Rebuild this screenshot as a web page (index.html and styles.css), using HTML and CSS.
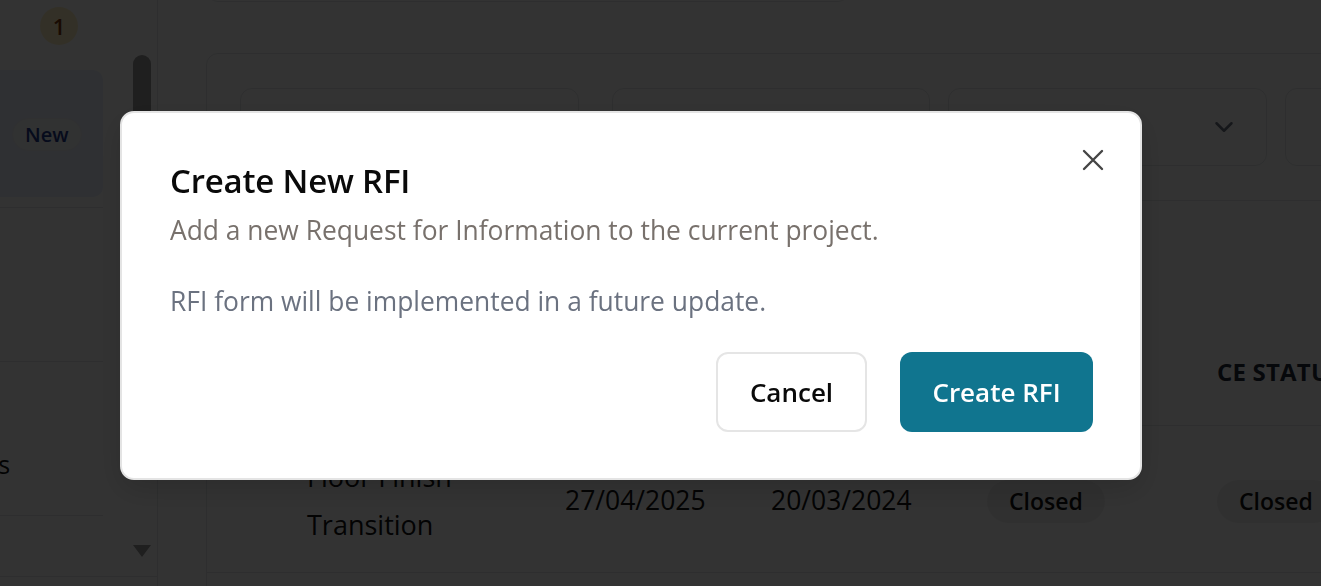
FILE: index.html
```html
<!DOCTYPE html>
<html lang="en">
<head>
<meta charset="utf-8">
<title>Create New RFI</title>
<link rel="stylesheet" href="styles.css">
</head>
<body>
<div class="app">
  <aside class="sidebar">
    <div class="side-scroll">
      <div class="side-list">
        <div class="side-top"><span class="count-badge">1</span></div>
        <div class="side-item side-item--active"><span class="new-pill">New</span></div>
        <div class="side-item side-item--plain"></div>
        <div class="side-item side-item--label"><span class="side-label">RFIs</span></div>
        <div class="side-item side-item--last"></div>
      </div>
      <div class="scroll-track">
        <div class="scroll-thumb"></div>
        <div class="scroll-arrow"></div>
      </div>
    </div>
    <div class="side-footer"></div>
  </aside>

  <main class="main">
    <div class="search-box"></div>
    <section class="card">
      <div class="filters">
        <div class="field field--search"></div>
        <div class="field field--date"></div>
        <div class="field field--select">
          <svg class="chevron" viewBox="0 0 24 24" width="24" height="24" aria-hidden="true"><path d="M6 9l6 6 6-6" fill="none" stroke="#6b7280" stroke-width="2" stroke-linecap="round" stroke-linejoin="round"/></svg>
        </div>
        <div class="field field--extra"></div>
      </div>
      <div class="table">
        <div class="toolbar"></div>
        <div class="row row--head">
          <div class="cell"></div>
          <div class="cell"></div>
          <div class="cell"></div>
          <div class="cell"></div>
          <div class="cell"></div>
          <div class="cell head-ce">CE STATUS</div>
        </div>
        <div class="row row--data">
          <div class="cell"></div>
          <div class="cell cell--name">Floor Finish<br>Transition</div>
          <div class="cell cell--date">27/04/2025</div>
          <div class="cell cell--date">20/03/2024</div>
          <div class="cell"><span class="status-pill">Closed</span></div>
          <div class="cell"><span class="status-pill">Closed</span></div>
        </div>
        <div class="row row--data">
          <div class="cell"></div>
          <div class="cell cell--name">Ceiling Grid<br>Alignment</div>
          <div class="cell cell--date">02/05/2025</div>
          <div class="cell cell--date">11/04/2024</div>
          <div class="cell"><span class="status-pill">Open</span></div>
          <div class="cell"><span class="status-pill">Open</span></div>
        </div>
      </div>
    </section>
  </main>
</div>

<div class="overlay"></div>

<div class="dialog" role="dialog" aria-labelledby="dlg-title">
  <button class="dialog-close" type="button" aria-label="Close">
    <svg viewBox="0 0 24 24" width="36" height="36" aria-hidden="true"><path d="M18 6L6 18M6 6l12 12" fill="none" stroke="currentColor" stroke-width="1.6" stroke-linecap="round"/></svg>
  </button>
  <h2 class="dialog-title" id="dlg-title">Create New RFI</h2>
  <p class="dialog-desc">Add a new Request for Information to the current project.</p>
  <p class="dialog-body">RFI form will be implemented in a future update.</p>
  <div class="dialog-actions">
    <button class="btn btn--outline" type="button">Cancel</button>
    <button class="btn btn--primary" type="button">Create RFI</button>
  </div>
</div>
</body>
</html>
```

FILE: styles.css
```css
* { box-sizing: border-box; }

html, body {
  margin: 0;
  padding: 0;
  height: 100%;
  overflow: hidden;
}

body {
  font-family: "Open Sans", "Noto Sans", sans-serif;
  background: #ffffff;
  color: #0a0a0a;
}

.app {
  display: flex;
  height: 586px;
  overflow: hidden;
}

/* ---------- sidebar ---------- */
.sidebar {
  width: 158px;
  flex: none;
  border-right: 1px solid #e5e7eb;
  display: flex;
  flex-direction: column;
}

.side-scroll {
  height: 576px;
  display: flex;
}

.side-list {
  width: 103px;
  display: flex;
  flex-direction: column;
}

.side-top {
  height: 70px;
  padding-top: 7px;
  padding-left: 40px;
}

.count-badge {
  display: flex;
  align-items: center;
  justify-content: center;
  width: 38px;
  height: 38px;
  border-radius: 50%;
  background: #fdf0c4;
  color: #7c3a0a;
  font-size: 22px;
  font-weight: 600;
}

.side-item {
  border-bottom: 1px solid #e5e7eb;
}

.side-item--active {
  height: 138px;
  padding-bottom: 10px;
  background: #ffffff;
  position: relative;
}

.side-item--active::before {
  content: "";
  display: block;
  height: 127px;
  border-radius: 0 10px 10px 0;
  background: #e8effc;
}

.new-pill {
  position: absolute;
  left: 12px;
  top: 48px;
  height: 33px;
  padding: 0 12px;
  display: flex;
  align-items: center;
  border-radius: 17px;
  background: #f6f7fa;
  border: 1px solid #edf0f5;
  color: #1e3a8a;
  font-size: 20px;
  font-weight: 600;
}

.side-item--plain { height: 154px; }

.side-item--label {
  height: 154px;
  padding-top: 86px;
  overflow: hidden;
}

.side-label {
  display: block;
  margin-left: -37px;
  font-size: 25px;
  line-height: 32px;
  font-weight: 500;
  color: #111111;
}

.side-item--last { flex: 1; border-bottom: none; }

.scroll-track {
  margin-left: 30px;
  width: 18px;
  display: flex;
  flex-direction: column;
  justify-content: space-between;
  padding-top: 55px;
  padding-bottom: 19px;
}

.scroll-thumb {
  height: 260px;
  border-radius: 9px;
  background: #9a9a9a;
}

.scroll-arrow {
  width: 0;
  height: 0;
  border-left: 9px solid transparent;
  border-right: 9px solid transparent;
  border-top: 12px solid #9a9a9a;
}

.side-footer {
  flex: 1;
  border-top: 1px solid #e5e7eb;
}

/* ---------- main ---------- */
.main {
  flex: 1;
  min-width: 0;
  overflow: hidden;
  padding-left: 48px;
}

.search-box {
  width: 644px;
  height: 44px;
  margin-top: -42px;
  border: 1px solid #e5e7eb;
  border-radius: 12px;
}

.card {
  margin-top: 51px;
  width: 1200px;
  border: 1px solid #e5e7eb;
  border-radius: 12px;
}

.filters {
  display: flex;
  padding: 34px 33px;
  border-bottom: 1px solid #e5e7eb;
}

.field {
  height: 78px;
  border: 1px solid #e5e7eb;
  border-radius: 12px;
  flex: none;
}

.field--search { width: 339px; }
.field--date { width: 318px; margin-left: 33px; }
.field--select {
  width: 319px;
  margin-left: 18px;
  display: flex;
  align-items: center;
  justify-content: flex-end;
  padding-right: 27px;
}
.field--extra { width: 300px; margin-left: 18px; }

.chevron { width: 30px; height: 30px; }

.table {
  display: flex;
  flex-direction: column;
}

.toolbar { height: 117px; }

.row {
  display: grid;
  grid-template-columns: 100px 258px 206px 216px 230px 1fr;
  border-bottom: 1px solid #e5e7eb;
  align-items: center;
}

.row--head {
  height: 108px;
  font-size: 24px;
  font-weight: 700;
  color: #1f2937;
  letter-spacing: 0.2px;
}

.head-ce { white-space: nowrap; }

.row--data {
  height: 147px;
  font-size: 27px;
  color: #111111;
}

.cell--name { line-height: 48px; padding-top: 4px; }
.cell--date { font-size: 26.5px; padding-top: 2px; }

.status-pill {
  display: inline-flex;
  align-items: center;
  height: 43px;
  margin-top: 4px;
  padding: 0 22px;
  border-radius: 22px;
  background: #f0f0f0;
  font-size: 23px;
  font-weight: 600;
  color: #111111;
}

/* ---------- overlay & dialog ---------- */
.overlay {
  position: fixed;
  inset: 0;
  background: rgba(0, 0, 0, 0.8);
}

.dialog {
  position: fixed;
  left: 120px;
  top: 111px;
  width: 1022px;
  background: #ffffff;
  border: 2px solid #e4e4e4;
  border-radius: 14px;
  padding: 50px 47px 46px 48px;
  box-shadow: 0 10px 30px rgba(0, 0, 0, 0.15);
}

.dialog-close {
  position: absolute;
  top: 29px;
  right: 29px;
  width: 36px;
  height: 36px;
  padding: 0;
  border: none;
  background: none;
  color: #454545;
  cursor: pointer;
}

.dialog-close svg { display: block; }

.dialog-title {
  margin: 0;
  font-size: 33px;
  line-height: 36px;
  font-weight: 600;
  color: #0a0a0a;
  letter-spacing: -0.2px;
}

.dialog-desc {
  margin: 15px 0 0;
  font-size: 26.4px;
  line-height: 32px;
  color: #78716c;
}

.dialog-body {
  margin: 39px 0 0;
  font-size: 26.4px;
  line-height: 32px;
  color: #6b7280;
}

.dialog-actions {
  display: flex;
  justify-content: flex-end;
  gap: 33px;
  margin-top: 35px;
}

.btn {
  height: 80px;
  border-radius: 12px;
  font-family: inherit;
  font-size: 26px;
  font-weight: 600;
  cursor: pointer;
}

.btn--outline {
  width: 151px;
  background: #ffffff;
  border: 2px solid #e5e5e5;
  color: #0a0a0a;
}

.btn--primary {
  width: 193px;
  background: #10758f;
  border: none;
  color: #ffffff;
}
```
